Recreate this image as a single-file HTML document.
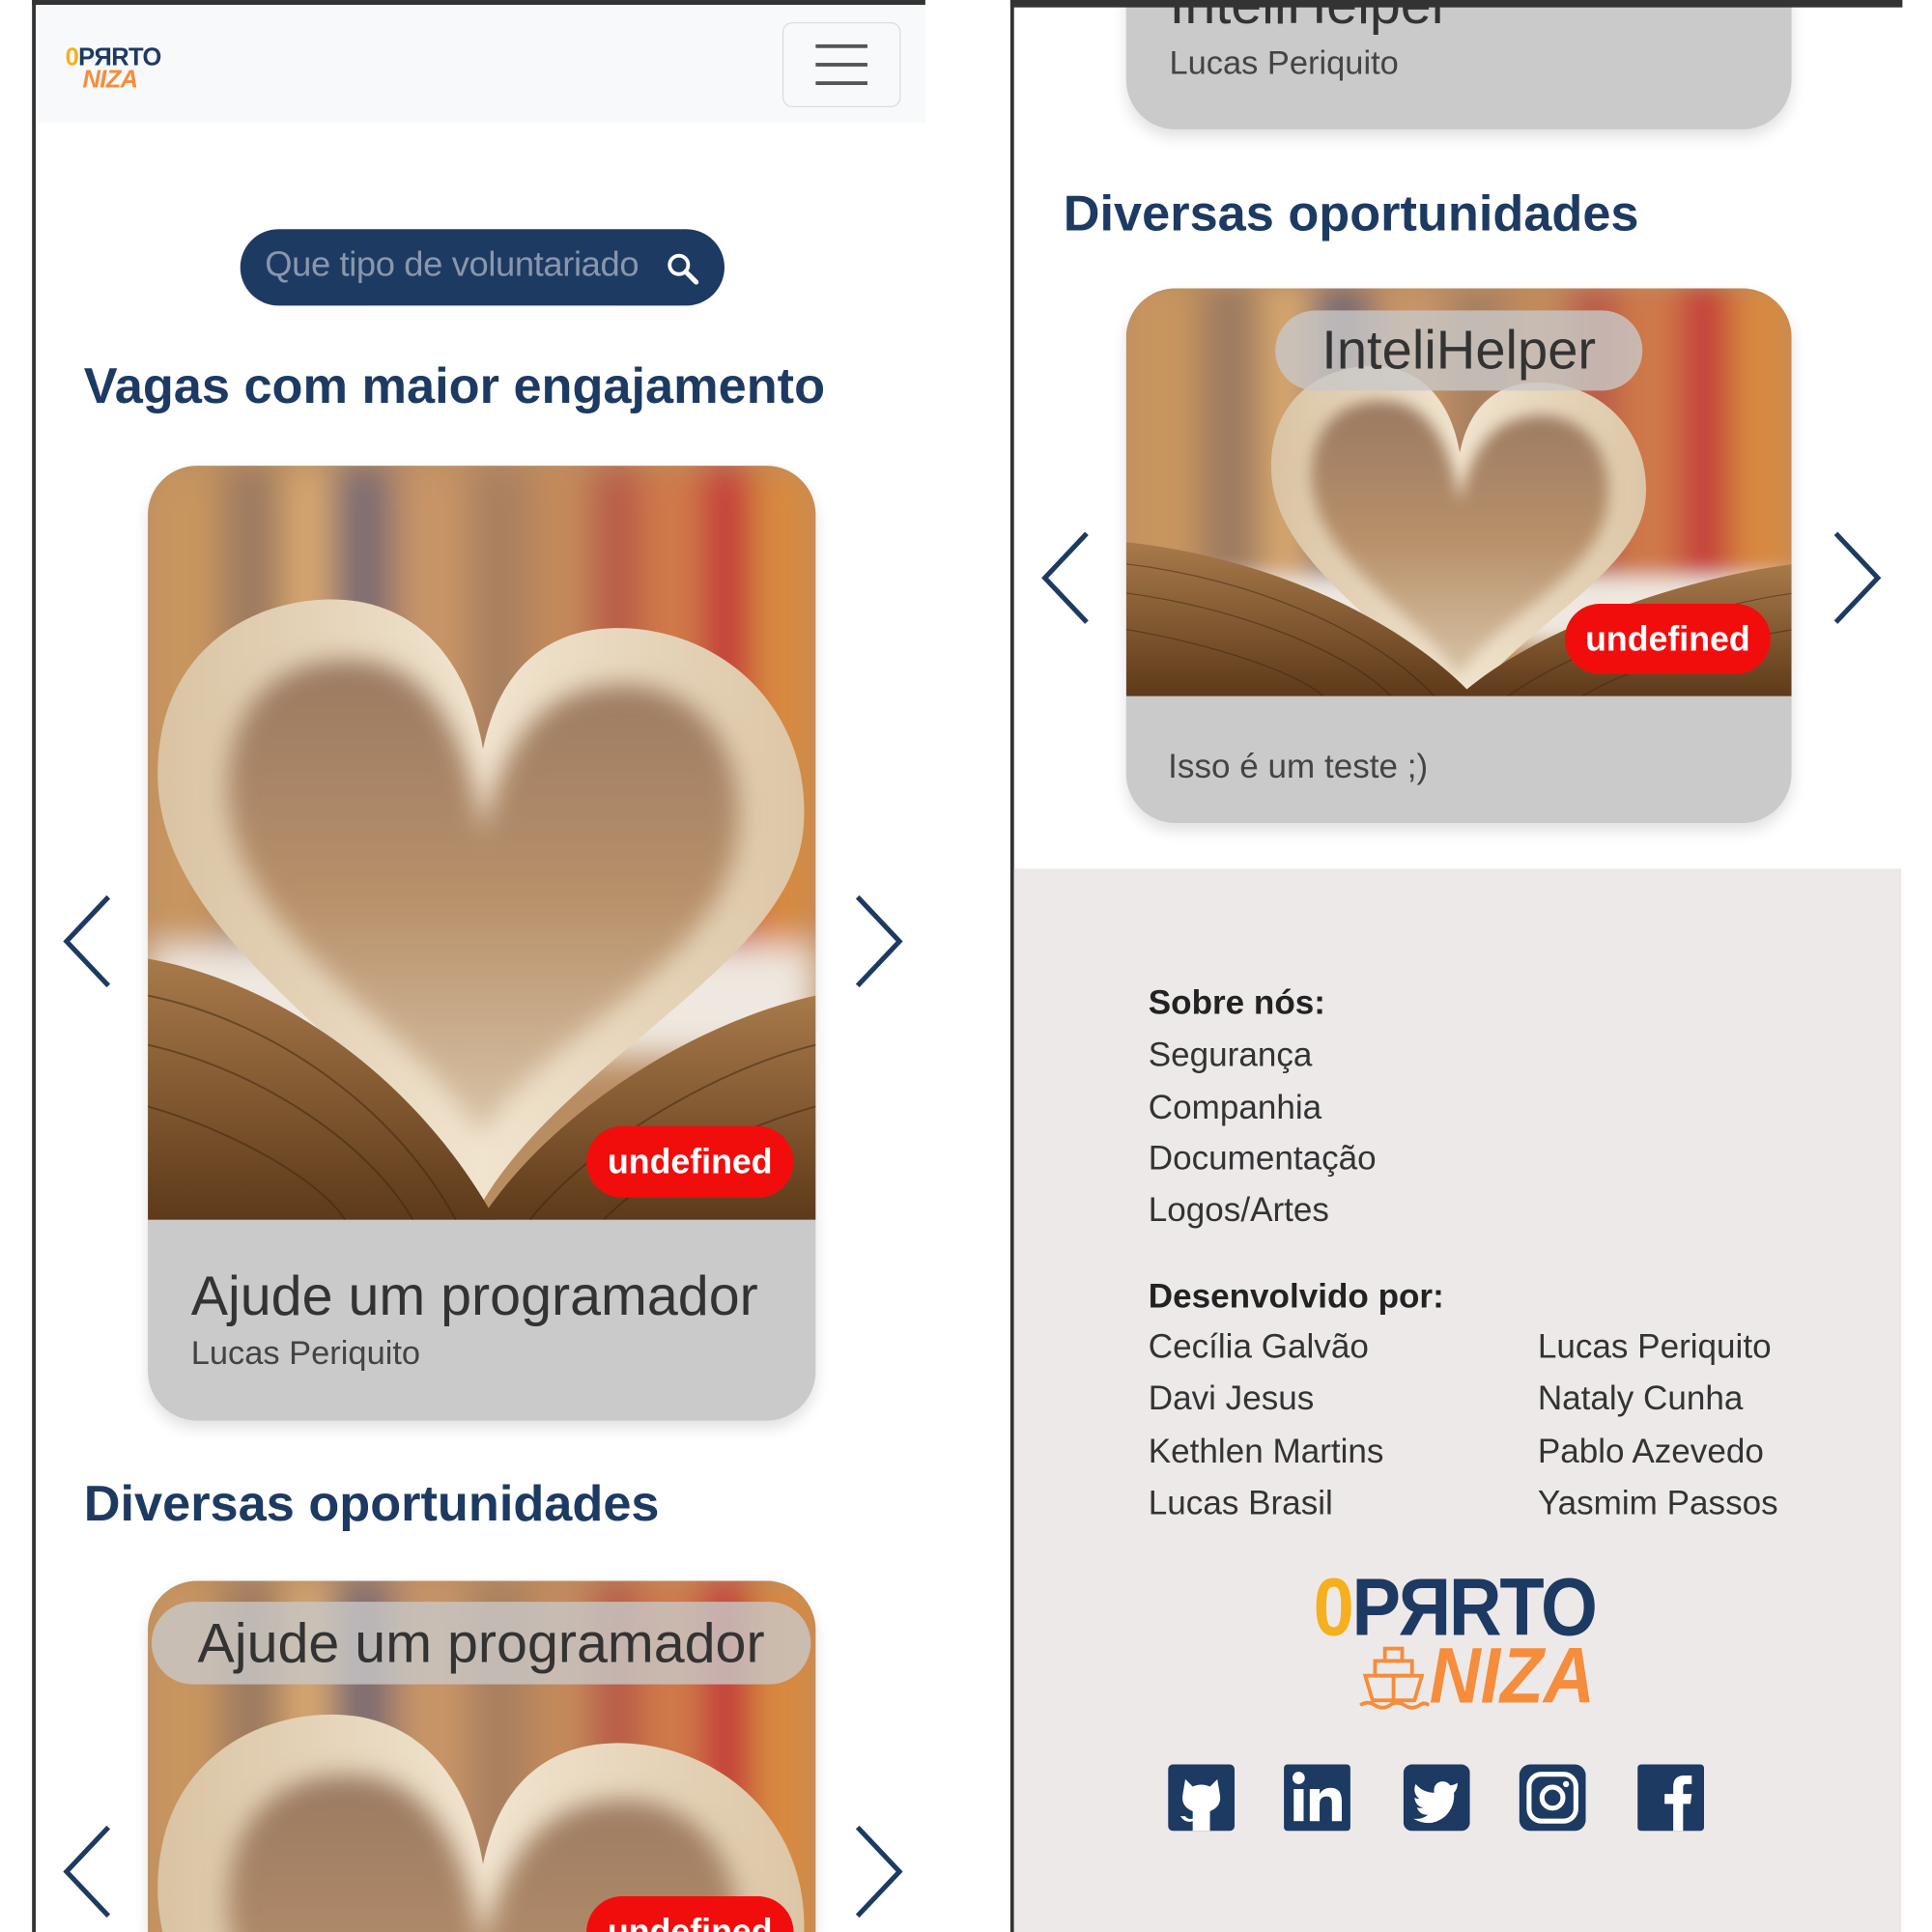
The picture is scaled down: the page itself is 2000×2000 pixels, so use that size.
<!DOCTYPE html>
<html><head><meta charset="utf-8">
<style>
*{box-sizing:border-box;margin:0;padding:0}
html,body{width:2000px;height:2000px;overflow:hidden;background:#fff;font-family:"Liberation Sans",sans-serif}
body{position:relative}
#wrap{position:absolute;left:0;top:0;width:1568px;height:1568px;overflow:hidden;transform:scale(1.2755);transform-origin:0 0;background:#fff}
.abs{position:absolute}
.h2{position:absolute;color:#1d3a63;font-weight:bold;font-size:41px;white-space:nowrap}
.card{position:absolute;background:#cacaca;border-radius:40px;overflow:hidden;box-shadow:0 6px 12px rgba(0,0,0,.12)}
.badge{position:absolute;background:#f20d0d;color:#fff;font-weight:bold;font-size:28px;border-radius:30px;text-align:center;white-space:nowrap}
.chev{position:absolute}
.ft{position:absolute;color:#333;font-size:27.5px;white-space:nowrap}
.label{position:absolute;background:rgba(200,200,200,.8);border-radius:34px;color:#333;text-align:center;white-space:nowrap}
.narrow{font-family:"Liberation Sans Narrow","Liberation Sans",sans-serif}
</style></head><body><div id="wrap">

<svg width="0" height="0" style="position:absolute">
<defs>
<filter id="bl" x="-10%" y="-10%" width="120%" height="120%"><feGaussianBlur stdDeviation="14"/></filter>
<filter id="bl2" x="-10%" y="-10%" width="120%" height="120%"><feGaussianBlur stdDeviation="10"/></filter>
<linearGradient id="pg" x1="0" x2="1" y1="0" y2="0"><stop offset="0" stop-color="#d9c3a3"/><stop offset=".5" stop-color="#f1e4cf"/><stop offset="1" stop-color="#dcc6a6"/></linearGradient>
<linearGradient id="cav" x1="0" x2="0" y1="0" y2="1"><stop offset="0" stop-color="#9a7a62"/><stop offset=".5" stop-color="#b8906a"/><stop offset="1" stop-color="#d8c4a8"/></linearGradient>
<linearGradient id="bk" x1="0" x2="0" y1="0" y2="1"><stop offset="0" stop-color="#a87a4a"/><stop offset="1" stop-color="#5e3a1a"/></linearGradient>
<g id="stripes">
<rect width="542" height="612" fill="#b98d62"/>
<g filter="url(#bl)">
<rect x="0" y="0" width="60" height="420" fill="#c8955e"/>
<rect x="60" y="0" width="50" height="420" fill="#9d7a60"/>
<rect x="110" y="0" width="40" height="420" fill="#d8a86e"/>
<rect x="150" y="0" width="50" height="420" fill="#7d6c72"/>
<rect x="200" y="0" width="60" height="420" fill="#c89466"/>
<rect x="260" y="0" width="50" height="420" fill="#a88060"/>
<rect x="310" y="0" width="50" height="420" fill="#c48a5a"/>
<rect x="360" y="0" width="40" height="420" fill="#b85a4a"/>
<rect x="400" y="0" width="50" height="420" fill="#d07a48"/>
<rect x="450" y="0" width="40" height="420" fill="#c43a3a"/>
<rect x="490" y="0" width="52" height="420" fill="#d88a40"/>
<rect x="0" y="390" width="542" height="90" fill="#efe8e0"/>
</g>
</g>
<g id="heart">
<path d="M270,600 C200,480 8,390 8,250 C8,140 100,100 170,110 C230,120 262,170 272,230 C286,160 330,128 392,132 C475,138 540,205 532,295 C522,405 340,480 270,600 Z" fill="url(#pg)"/>
<path d="M270,545 C215,450 60,380 65,255 C70,170 135,150 185,160 C235,172 262,230 272,300 C290,215 325,180 385,178 C450,178 488,235 478,305 C462,410 320,460 270,545 Z" fill="url(#cav)" filter="url(#bl2)"/>
</g>
<g id="book">
<path d="M0,400 C110,420 220,500 282,612 L0,612 Z" fill="url(#bk)"/>
<path d="M542,430 C450,450 330,520 270,612 L542,612 Z" fill="url(#bk)"/>
<g stroke="#3c240e" stroke-width="1.5" opacity=".5" fill="none">
<path d="M0,430 C100,450 200,520 250,612"/><path d="M0,470 C90,490 180,550 215,612"/><path d="M0,520 C70,540 140,580 160,612"/>
<path d="M542,470 C460,490 360,550 310,612"/><path d="M542,520 C470,540 400,580 370,612"/>
</g>
</g>
</defs>
</svg>

<!-- LEFT PANEL -->
<div class="abs" style="left:26px;top:0;width:3px;height:1568px;background:#333"></div>
<div class="abs" style="left:26px;top:0;width:725px;height:4px;background:#333"></div>
<div class="abs" style="left:29px;top:4px;width:722px;height:96px;background:#f8f9fa"></div>
<div class="abs narrow" style="left:53px;top:38px;font-weight:bold;font-size:20px;line-height:18px;letter-spacing:-0.5px;white-space:nowrap">
<span style="color:#f6b01e">0</span><span style="color:#1d3a63">PЯRTO</span><br><span style="color:#f58d3c;padding-left:14px;font-style:italic">NIZA</span></div>
<div class="abs" style="left:635px;top:18px;width:96px;height:69px;border:1px solid #dcdcdc;border-radius:8px;background:#f8f9fa"></div>
<div class="abs" style="left:662px;top:36px;width:42px;height:3px;background:#555"></div>
<div class="abs" style="left:662px;top:51px;width:42px;height:3px;background:#555"></div>
<div class="abs" style="left:662px;top:66px;width:42px;height:3px;background:#555"></div>

<div class="abs" style="left:195px;top:186px;width:393px;height:62px;background:#1d3a63;border-radius:31px"></div>
<div class="abs" style="left:215px;top:199px;color:#8a97aa;font-size:28.5px;white-space:nowrap;letter-spacing:-0.3px">Que tipo de voluntariado</div>
<svg class="abs" style="left:540px;top:204px" width="28" height="28" viewBox="0 0 28 28"><circle cx="11" cy="11" r="7.5" fill="none" stroke="#fff" stroke-width="3"/><path d="M16.5 16.5 L25 25" stroke="#fff" stroke-width="4" stroke-linecap="round"/></svg>

<div class="h2" style="left:68px;top:290px">Vagas com maior engajamento</div>

<div class="card" style="left:120px;top:378px;width:542px;height:775px">
<svg class="abs" style="left:0;top:0" width="542" height="612" viewBox="0 0 542 612"><use href="#stripes"/><use href="#heart"/><use href="#book"/></svg>
<div class="badge" style="left:356px;top:536px;width:168px;height:58px;line-height:58px">undefined</div>
<div class="abs" style="left:35px;top:648px;font-size:45px;color:#333;white-space:nowrap">Ajude um programador</div>
<div class="abs" style="left:35px;top:705px;font-size:27px;color:#444;white-space:nowrap">Lucas Periquito</div>
</div>
<svg class="chev" style="left:48px;top:725px" width="46" height="78" viewBox="0 0 46 78"><path d="M40 3 L6 39 L40 75" fill="none" stroke="#1d3a63" stroke-width="4"/></svg>
<svg class="chev" style="left:690px;top:725px" width="46" height="78" viewBox="0 0 46 78"><path d="M6 3 L40 39 L6 75" fill="none" stroke="#1d3a63" stroke-width="4"/></svg>

<div class="h2" style="left:68px;top:1197px">Diversas oportunidades</div>
<div class="card" style="left:120px;top:1283px;width:542px;height:285px;border-radius:40px 40px 0 0">
<svg class="abs" style="left:0;top:0" width="542" height="612" viewBox="0 0 542 612"><use href="#stripes"/><use href="#heart"/><use href="#book"/></svg>
<div class="label" style="left:3px;top:17px;width:535px;height:67px;line-height:67px;font-size:45px">Ajude um programador</div>
<div class="badge" style="left:356px;top:256px;width:168px;height:58px;line-height:58px">undefined</div>
</div>
<svg class="chev" style="left:48px;top:1480px" width="46" height="78" viewBox="0 0 46 78"><path d="M40 3 L6 39 L40 75" fill="none" stroke="#1d3a63" stroke-width="4"/></svg>
<svg class="chev" style="left:690px;top:1480px" width="46" height="78" viewBox="0 0 46 78"><path d="M6 3 L40 39 L6 75" fill="none" stroke="#1d3a63" stroke-width="4"/></svg>

<!-- RIGHT PANEL -->
<div class="abs" style="left:820px;top:0;width:3px;height:1568px;background:#333"></div>
<div class="card" style="left:914px;top:-40px;width:540px;height:145px;border-radius:0 0 40px 40px">
<div class="abs" style="left:35px;top:18px;font-size:45px;color:#333;white-space:nowrap">InteliHelper</div>
<div class="abs" style="left:35px;top:76px;font-size:27px;color:#444;white-space:nowrap">Lucas Periquito</div>
</div>
<div class="abs" style="left:820px;top:0;width:724px;height:6px;background:#333"></div>

<div class="h2" style="left:863px;top:150px">Diversas oportunidades</div>
<div class="card" style="left:914px;top:234px;width:540px;height:434px">
<svg class="abs" style="left:0;top:0" width="540" height="331" viewBox="0 0 540 331">
<use href="#stripes" transform="scale(1,0.6)"/>
<use href="#heart" transform="translate(113,0) scale(0.58)"/>
<use href="#book" transform="translate(0,-30) scale(1,0.59)"/>
</svg>
<div class="label" style="left:121px;top:18px;width:298px;height:65px;line-height:65px;font-size:44px">InteliHelper</div>
<div class="badge" style="left:356px;top:256px;width:167px;height:57px;line-height:57px">undefined</div>
<div class="abs" style="left:34px;top:372px;font-size:27.5px;color:#444;white-space:nowrap">Isso é um teste ;)</div>
</div>
<svg class="chev" style="left:842px;top:430px" width="46" height="78" viewBox="0 0 46 78"><path d="M40 3 L6 39 L40 75" fill="none" stroke="#1d3a63" stroke-width="4"/></svg>
<svg class="chev" style="left:1484px;top:430px" width="46" height="78" viewBox="0 0 46 78"><path d="M6 3 L40 39 L6 75" fill="none" stroke="#1d3a63" stroke-width="4"/></svg>

<div class="abs" style="left:823px;top:705px;width:720px;height:863px;background:#eee9e9"></div>
<div class="ft" style="left:932px;top:798px;font-weight:bold;color:#222">Sobre nós:</div>
<div class="ft" style="left:932px;top:840px">Segurança</div>
<div class="ft" style="left:932px;top:883px">Companhia</div>
<div class="ft" style="left:932px;top:924px">Documentação</div>
<div class="ft" style="left:932px;top:966px">Logos/Artes</div>
<div class="ft" style="left:932px;top:1036px;font-weight:bold;color:#222">Desenvolvido por:</div>
<div class="ft" style="left:932px;top:1077px">Cecília Galvão</div>
<div class="ft" style="left:932px;top:1119px">Davi Jesus</div>
<div class="ft" style="left:932px;top:1162px">Kethlen Martins</div>
<div class="ft" style="left:932px;top:1204px">Lucas Brasil</div>
<div class="ft" style="left:1248px;top:1077px">Lucas Periquito</div>
<div class="ft" style="left:1248px;top:1119px">Nataly Cunha</div>
<div class="ft" style="left:1248px;top:1162px">Pablo Azevedo</div>
<div class="ft" style="left:1248px;top:1204px">Yasmim Passos</div>

<div class="abs narrow" style="left:1066px;top:1274px;font-weight:bold;font-size:66px;line-height:60px;letter-spacing:-2px;white-space:nowrap;transform:scaleX(0.9);transform-origin:0 0">
<span style="color:#f6b01e">0</span><span style="color:#1d3a63">PЯRTO</span></div>
<svg class="abs" style="left:1102px;top:1334px" width="58" height="54" viewBox="0 0 58 54"><g fill="none" stroke="#f58d3c" stroke-width="3"><rect x="22" y="4" width="14" height="10"/><rect x="14" y="14" width="30" height="12"/><path d="M6 26 H52 L46 46 H12 Z"/><path d="M29 26 V46"/><path d="M2 50 Q8 46 14 50 Q20 54 26 50 Q32 46 38 50 Q44 54 50 50 Q54 47 58 50"/></g></svg>
<div class="abs narrow" style="left:1160px;top:1332px;font-weight:bold;font-style:italic;font-size:64px;line-height:56px;color:#f58d3c;white-space:nowrap;transform:scaleX(0.9);transform-origin:0 0">NIZA</div>

<svg class="abs" style="left:948px;top:1432px" width="54" height="54" viewBox="0 0 54 54"><rect width="54" height="54" rx="4" fill="#1d3a63"/><path d="M14 12 L20 18 Q27 15 34 18 L40 12 L42 24 Q44 34 34 38 L34 54 L20 54 L20 46 Q14 48 10 42 L14 42 Q16 45 20 44 L20 38 Q10 34 12 24 Z" fill="#fff"/></svg>
<svg class="abs" style="left:1042px;top:1432px" width="54" height="54" viewBox="0 0 54 54"><rect width="54" height="54" rx="3" fill="#1d3a63"/><rect x="8" y="20" width="8" height="26" fill="#fff"/><circle cx="12" cy="11" r="5" fill="#fff"/><path d="M21 20 H29 V24 Q32 19 38 19 Q47 19 47 30 V46 H39 V31 Q39 26 35 26 Q29 26 29 32 V46 H21 Z" fill="#fff"/></svg>
<svg class="abs" style="left:1139px;top:1432px" width="54" height="54" viewBox="0 0 54 54"><rect width="54" height="54" rx="7" fill="#1d3a63"/><path d="M44 15 Q41 17 38 17 Q35 13 30 14 Q24 16 25 23 Q16 23 10 16 Q7 23 13 28 Q11 28 9 27 Q10 34 16 35 Q14 36 11 35 Q13 41 20 41 Q15 45 8 44 Q22 52 34 42 Q42 34 41 23 Q44 20 44 15 Z" fill="#fff"/></svg>
<svg class="abs" style="left:1233px;top:1432px" width="54" height="54" viewBox="0 0 54 54"><rect width="54" height="54" rx="9" fill="#1d3a63"/><rect x="8" y="8" width="38" height="38" rx="10" fill="none" stroke="#fff" stroke-width="4"/><circle cx="27" cy="27" r="8.5" fill="none" stroke="#fff" stroke-width="4"/><circle cx="38" cy="16" r="2.5" fill="#fff"/></svg>
<svg class="abs" style="left:1329px;top:1432px" width="54" height="54" viewBox="0 0 54 54"><rect width="54" height="54" rx="3" fill="#1d3a63"/><path d="M29 54 V32 H22 V24 H29 V18 Q29 9 38 9 H44 V16 H39 Q37 16 37 19 V24 H44 L43 32 H37 V54 Z" fill="#fff"/></svg>

</div></body></html>
